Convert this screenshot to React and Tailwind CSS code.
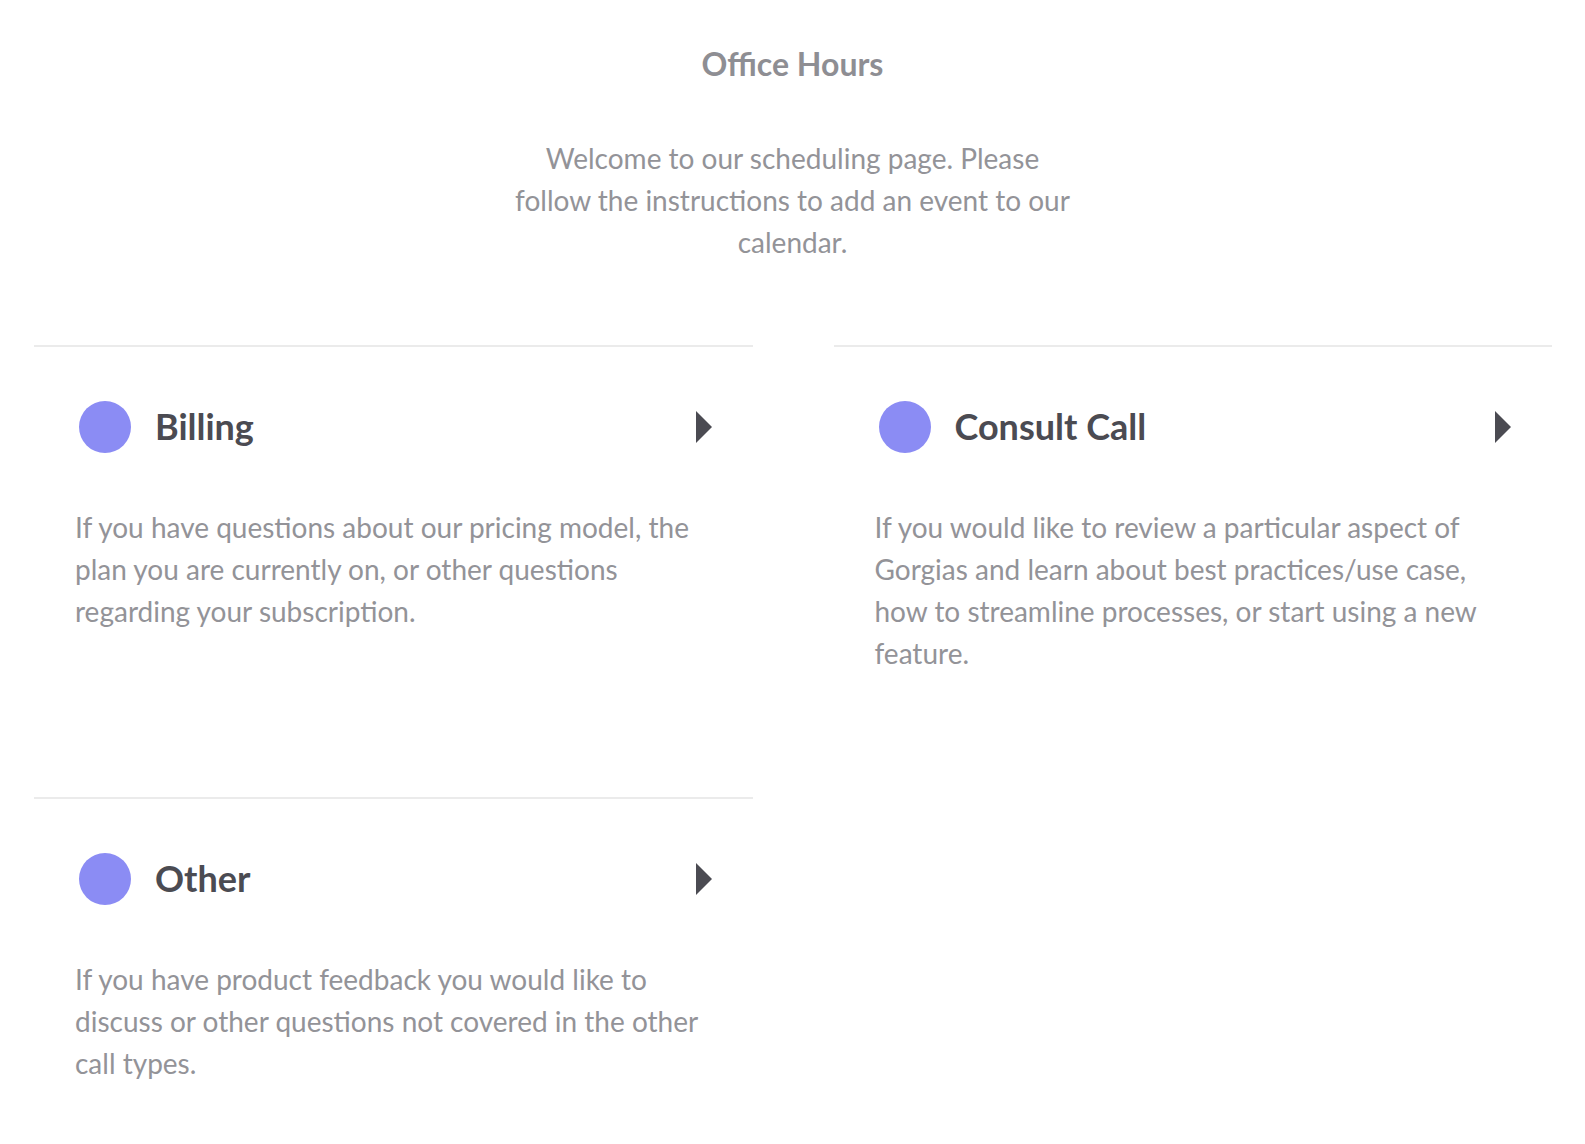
import React from 'react';

const callTypes = [
  {
    id: 'billing',
    name: 'Billing',
    description:
      'If you have questions about our pricing model, the plan you are currently on, or other questions regarding your subscription.',
  },
  {
    id: 'consult',
    name: 'Consult Call',
    description:
      'If you would like to review a particular aspect of Gorgias and learn about best practices/use case, how to streamline processes, or start using a new feature.',
  },
  {
    id: 'other',
    name: 'Other',
    description:
      'If you have product feedback you would like to discuss or other questions not covered in the other call types.',
  },
];

const CallTypeCard = ({ item }) => (
  <div className="border-t-2 border-[#ebebeb] px-[41px] pt-[54px]">
    <div className="flex items-center h-[52px]">
      <div className="ml-1 w-[52px] h-[52px] rounded-full bg-[#8b8cf4] shrink-0" />
      <h2 className="ml-6 text-[36px] font-bold text-[#4b4b52] leading-none -mt-[3px]">{item.name}</h2>
      <svg className="ml-auto" width="16" height="32" viewBox="0 0 16 32">
        <path d="M0 0 L16 16 L0 32 Z" fill="#4b4b52" />
      </svg>
    </div>
    <p className="mt-[53px] text-[28px] leading-[42px] text-[#939398]">{item.description}</p>
  </div>
);

const App = () => {
  return (
    <div className="min-h-screen bg-white font-['Lato',sans-serif] pb-[60px]">
      <div className="flex flex-col items-center pt-[43px]">
        <h1 className="text-[32px] leading-[42px] font-bold text-[#8e8e93]">Office Hours</h1>
        <p className="mt-[52px] w-[564px] text-center text-[28px] leading-[42px] text-[#939398]">
          Welcome to our scheduling page. Please follow the instructions to add an event to our calendar.
        </p>
      </div>
      <div className="grid grid-cols-2 gap-x-[81px] gap-y-[123px] pl-[34px] pr-[33px] mt-[82px]">
        {callTypes.map((item) => (
          <CallTypeCard key={item.id} item={item} />
        ))}
      </div>
    </div>
  );
};

export default App;
